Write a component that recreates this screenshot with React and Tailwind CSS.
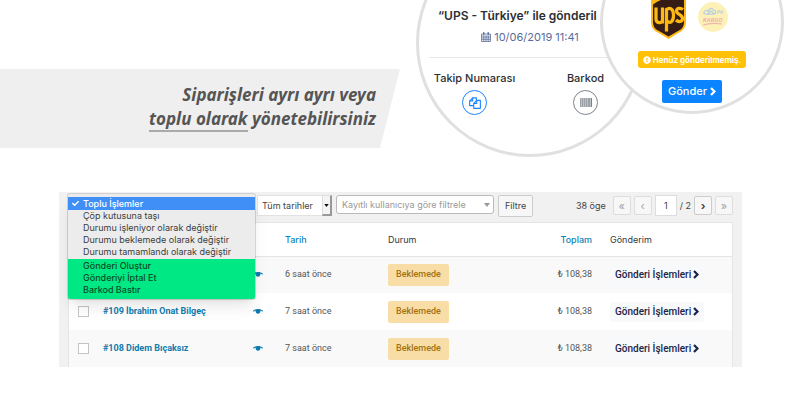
import { useState } from 'react'
import { FaExclamationCircle, FaCheck } from 'react-icons/fa'

const bulkActions = [
  'Toplu İşlemler',
  'Çöp kutusuna taşı',
  'Durumu işleniyor olarak değiştir',
  'Durumu beklemede olarak değiştir',
  'Durumu tamamlandı olarak değiştir',
]

const shippingActions = ['Gönderi Oluştur', 'Gönderiyi İptal Et', 'Barkod Bastır']

const orders = [
  { id: 110, name: '', date: '6 saat önce', status: 'Beklemede', total: '₺ 108,38' },
  { id: 109, name: '#109 İbrahim Onat Bilgeç', date: '7 saat önce', status: 'Beklemede', total: '₺ 108,38' },
  { id: 108, name: '#108 Didem Bıçaksız', date: '7 saat önce', status: 'Beklemede', total: '₺ 108,38' },
]

function CalendarIcon() {
  return (
    <svg viewBox="0 0 20 20" className="size-[10px]" fill="none" stroke="currentColor" strokeWidth="1.5" aria-hidden="true">
      <path d="M1 4h18v15H1zM1 8h18M1 11.7h18M1 15.3h18M5.5 8v11M10 8v11M14.5 8v11" />
      <path d="M5.5 0.5v5M14.5 0.5v5" strokeWidth="3" />
    </svg>
  )
}

function CopyIcon() {
  return (
    <svg viewBox="0 0 28 28" className="size-3" fill="none" stroke="currentColor" strokeWidth="2.6" strokeLinejoin="round" aria-hidden="true">
      <path d="M11 20H1.500V9l7-7H17v6" />
      <path d="M8.500 2v7h-7" />
      <path d="M18 8h8.500v18.500H11V15z" />
      <path d="M18 8v7h-7" />
    </svg>
  )
}

function BarcodeIcon() {
  return (
    <svg viewBox="0 0 24 18" className="h-[9px] w-3" fill="currentColor" aria-hidden="true">
      <path d="M0 0h1.500v18H0zM2.500 0h1v18h-1zM4.500 0h1.500v18H4.500zM7 0h2.500v18H7zM10.500 0h1v18h-1zM12.500 0h1.500v18h-1.500zM15 0h2.500v18H15zM18.500 0h1.500v18h-1.500zM21 0h3v18h-3z" />
    </svg>
  )
}

function ChevronIcon() {
  return (
    <svg viewBox="0 0 12 18" className="h-[9px] w-[6px]" fill="none" stroke="currentColor" strokeWidth="4.500" aria-hidden="true">
      <path d="M2 2l7 7-7 7" />
    </svg>
  )
}

function EyeIcon() {
  return (
    <svg viewBox="0 0 20 10" className="h-[5px] w-[10px]" aria-hidden="true">
      <path fill="#0f7cae" d="M0 3.500C3 1 6 0 10 0s7 1 10 3.500l-1 2C17.500 4.200 16 3.600 14.600 3.200a4.800 4.800 0 1 1-9.200 0C4 3.600 2.500 4.200 1 5.500z" />
    </svg>
  )
}

function UpsLogo() {
  return (
    <svg viewBox="0 0 70 88" className="h-[44px] w-[35px]" role="img" aria-label="UPS">
      <path fill="#fdb913" d="M0 3C10-3 22-6 35-6s25 3 35 9v50c0 12-5 18-14 22L35 88 14 75C5 71 0 65 0 53z" />
      <path fill="#351c15" d="M4 19C22 5 45 2 66 6v47c0 10-4 15-12 19L35 83 16 72C8 68 4 63 4 53z" />
      <g fill="none" stroke="#fdb913" strokeWidth="6.500">
        <path d="M10 25v23c0 9 11 9 13 3V25M23 48v9" />
        <path d="M31 73V29c6-5 14-2 14 11s-6 18-13 12" />
        <path d="M64 29c-5-4-13-3-13 3 0 7 12 7 12 15 0 7-8 8-13 3" />
      </g>
    </svg>
  )
}

function KargoLogo() {
  return (
    <svg viewBox="0 0 60 60" className="size-[30px]" role="img" aria-label="PTT Kargo">
      <circle cx="30" cy="30" r="30" fill="#fdf1b8" />
      <g fill="none" strokeWidth="2.500">
        <path stroke="#b9cfdc" d="M12 21c2-5 6-5 8-2 3-8 9-8 11-2 5-1 6 5 2 7H15c-3 0-4-2-3-3zM19 24l6-6 7 5" />
        <path stroke="#f0b4ae" d="M10 46c12-4 26-4 38-2" />
      </g>
      <text x="38" y="24" fontSize="9" fontWeight="700" fill="#b9cfdc" fontFamily="Inter, sans-serif">Ptt</text>
      <text x="10" y="40" fontSize="12" fontWeight="800" fontStyle="italic" fill="#f0b4ae" fontFamily="Roboto, sans-serif">KARGO</text>
    </svg>
  )
}

function Banner() {
  return (
    <div className="mt-[69px] h-[79px] w-1/2 shrink-0 bg-[#efefef] pt-[14px] pr-6 text-right [clip-path:polygon(0_0,100%_0,calc(100%-20px)_100%,0_100%)]">
      <h1 className="font-['Noto_Sans',sans-serif] text-[17px] leading-6 font-bold text-[#555] italic">
        Siparişleri ayrı ayrı veya
        <br />
        <span className="border-b-2 border-[#aaa]">toplu olarak</span> yönetebilirsiniz
      </h1>
    </div>
  )
}

function TrackingBubble() {
  return (
    <div className="-mt-[71px] ml-4 size-[228px] shrink-0 overflow-hidden rounded-full border-[3px] border-[#e0e0e0] bg-white pt-[76px] text-[#2b2f33]">
      <p className="pl-[19px] text-[12px] leading-4 font-semibold whitespace-nowrap">“UPS - Türkiye” ile gönderil</p>
      <p className="mt-[5px] flex items-center justify-center gap-[3px] text-[11px] leading-4 text-[#5a6b9a]">
        <CalendarIcon />
        10/06/2019 11:41
      </p>
      <hr className="mt-3 ml-[10px] border-[#e6e6e6]" />
      <div className="mt-3 grid grid-cols-2 text-center text-[11px] leading-4 font-medium">
        <div className="flex flex-col items-center gap-1">
          Takip Numarası
          <button aria-label="Kopyala" className="flex size-[25px] items-center justify-center rounded-full border border-[#1a84ff] text-[#1a84ff]">
            <CopyIcon />
          </button>
        </div>
        <div className="flex flex-col items-center gap-1">
          Barkod
          <button aria-label="Barkod" className="flex size-[25px] items-center justify-center rounded-full border border-[#7b838a] text-[#7b838a]">
            <BarcodeIcon />
          </button>
        </div>
      </div>
    </div>
  )
}

function SendBubble() {
  return (
    <div className="z-10 -mt-[70px] -ml-11 flex size-[184px] shrink-0 flex-col items-center overflow-hidden rounded-full border-[3px] border-[#e0e0e0] bg-white pt-[62px]">
      <div className="flex items-center gap-3 pr-[6px]">
        <UpsLogo />
        <KargoLogo />
      </div>
      <p className="mt-3 flex h-[17px] items-center gap-[2px] rounded-[3px] bg-[#ffc107] px-[5px] text-[8px] font-bold text-white">
        <FaExclamationCircle />
        Henüz gönderilmemiş.
      </p>
      <button className="mt-3 flex h-[23px] items-center gap-[3px] rounded-[2px] bg-[#0a84ff] px-[6px] text-[11px] font-medium text-white">
        Gönder
        <ChevronIcon />
      </button>
    </div>
  )
}

function BulkMenu() {
  const [selected, setSelected] = useState(bulkActions[0])
  return (
    <div role="listbox" aria-label="Toplu İşlemler" className="absolute top-[2px] left-[9px] w-[187px] overflow-hidden rounded-[2px] bg-[#ececec] pt-[3px] text-[9px] leading-3 text-[#3c3c3c] shadow-lg ring-1 ring-[#00000022]">
      <div className="pb-px">
        {bulkActions.map((item) => (
          <button
            key={item}
            role="option"
            aria-selected={item === selected}
            onClick={() => setSelected(item)}
            className={
              item === selected
                ? 'flex h-[13px] w-full items-center bg-[#3f8ff7] font-medium text-white'
                : 'flex h-3 w-full items-center'
            }
          >
            <span className="flex w-[15px] justify-center">{item === selected && <FaCheck className="size-[7px]" />}</span>
            {item}
          </button>
        ))}
      </div>
      <div className="bg-[#00e884] pt-px pb-[3px] text-[#0a4d25]">
        {shippingActions.map((item) => (
          <button key={item} role="option" aria-selected={item === selected} onClick={() => setSelected(item)} className="flex h-3 w-full items-center pl-[15px] font-medium">
            {item}
          </button>
        ))}
      </div>
    </div>
  )
}

function Toolbar() {
  return (
    <div className="flex h-[30px] items-start pt-[3px] pr-[9px] pl-[198px] text-[9px] text-[#444]">
      <div className="relative h-[21px] w-[75px]">
        <select aria-label="Tarih filtresi" className="h-full w-full appearance-none border border-[#e2e2e2] bg-white pl-1">
          <option>Tüm tarihler</option>
        </select>
        <span className="pointer-events-none absolute top-0 right-0 flex h-full w-[10px] items-center justify-center border border-r-2 border-b-2 border-[#999] border-t-[#ddd] border-l-[#ddd] bg-[#f4f4f4]">
          <svg viewBox="0 0 6 4" className="h-[3px] w-[5px]"><path d="M0 0h6L3 4z" fill="#111" /></svg>
        </span>
      </div>
      <div className="relative ml-1 h-[19px] w-[158px]">
        <select aria-label="Müşteri filtresi" className="h-full w-full appearance-none rounded-[3px] border border-[#bbb] bg-white pl-[5px] text-[#999]">
          <option>Kayıtlı kullanıcıya göre filtrele</option>
        </select>
        <svg viewBox="0 0 6 4" className="pointer-events-none absolute top-2 right-1 h-1 w-[6px]"><path d="M0 0h6L3 4z" fill="#999" /></svg>
      </div>
      <button className="ml-1 h-[22px] rounded-[2px] border border-[#ccc] bg-[#f7f7f7] px-[6px]">Filtre</button>
      <div className="mt-px ml-auto flex h-[19px] items-center gap-[3px]">
        <span className="mr-1">38 öge</span>
        <button aria-label="İlk sayfa" className="h-full w-[18px] rounded-[2px] border border-[#ddd] bg-[#f7f7f7] text-[11px] leading-3 text-[#a0a5aa]">«</button>
        <button aria-label="Önceki sayfa" className="h-full w-[18px] rounded-[2px] border border-[#ddd] bg-[#f7f7f7] text-[11px] leading-3 text-[#a0a5aa]">‹</button>
        <input aria-label="Sayfa" defaultValue="1" className="h-[21px] w-[22px] border border-[#ddd] bg-white text-center" />
        <span>/ 2</span>
        <button aria-label="Sonraki sayfa" className="h-full w-[18px] rounded-[2px] border border-[#ccc] bg-[#f7f7f7] text-[11px] leading-3 font-bold">›</button>
        <button aria-label="Son sayfa" className="h-full w-[18px] rounded-[2px] border border-[#ddd] bg-[#f7f7f7] text-[11px] leading-3 text-[#a0a5aa]">»</button>
      </div>
    </div>
  )
}

function OrdersTable() {
  return (
    <div className="mx-[9px] border-x border-t border-[#e5e5e5] bg-white">
      <table className="w-full table-fixed text-left text-[9px] text-[#555]">
        <colgroup>
          <col className="w-[34px]" />
          <col className="w-[150px]" />
          <col className="w-8" />
          <col className="w-[103px]" />
          <col />
          <col className="w-[84px]" />
          <col className="w-[140px]" />
        </colgroup>
        <thead>
          <tr className="h-[33px] border-b border-[#e5e5e5] text-[#32373c]">
            <th />
            <th />
            <th />
            <th className="font-medium text-[#0f82b8]">Tarih</th>
            <th className="font-normal">Durum</th>
            <th className="text-right font-medium text-[#0f82b8]">Toplam</th>
            <th className="pl-[18px] font-normal">Gönderim</th>
          </tr>
        </thead>
        <tbody className="font-['Roboto','Inter',sans-serif]">
          {orders.map((order) => (
            <tr key={order.id} className="h-[37px] odd:bg-[#f9f9f9]">
              <td className="pl-[9px]">
                <input type="checkbox" aria-label="Siparişi seç" className="block size-[11px] appearance-none border border-[#c4c4c4] bg-white" />
              </td>
              <td>
                {order.name && <a href="#" className="font-bold text-[#0f7cae]">{order.name}</a>}
              </td>
              <td>
                <button aria-label="Önizleme" className="block"><EyeIcon /></button>
              </td>
              <td>{order.date}</td>
              <td>
                <span className="inline-flex h-[22px] items-center rounded-[2px] bg-[#f8dda7] px-2 font-medium text-[#a5720f]">{order.status}</span>
              </td>
              <td className="text-right">{order.total}</td>
              <td className="pl-[18px]">
                <button className="flex h-5 items-center gap-[2px] rounded-[2px] bg-[#f8f9fa] px-[5px] text-[10px] font-medium text-[#1c2348]">
                  Gönderi İşlemleri
                  <ChevronIcon />
                </button>
              </td>
            </tr>
          ))}
        </tbody>
      </table>
    </div>
  )
}

export default function App() {
  return (
    <main className="min-h-screen overflow-hidden bg-white font-['Inter',sans-serif]">
      <header className="flex h-[192px] items-start overflow-hidden">
        <Banner />
        <TrackingBubble />
        <SendBubble />
      </header>
      <section className="relative mr-[58px] ml-[59px] bg-[#f1f1f1]">
        <Toolbar />
        <OrdersTable />
        <BulkMenu />
      </section>
    </main>
  )
}
